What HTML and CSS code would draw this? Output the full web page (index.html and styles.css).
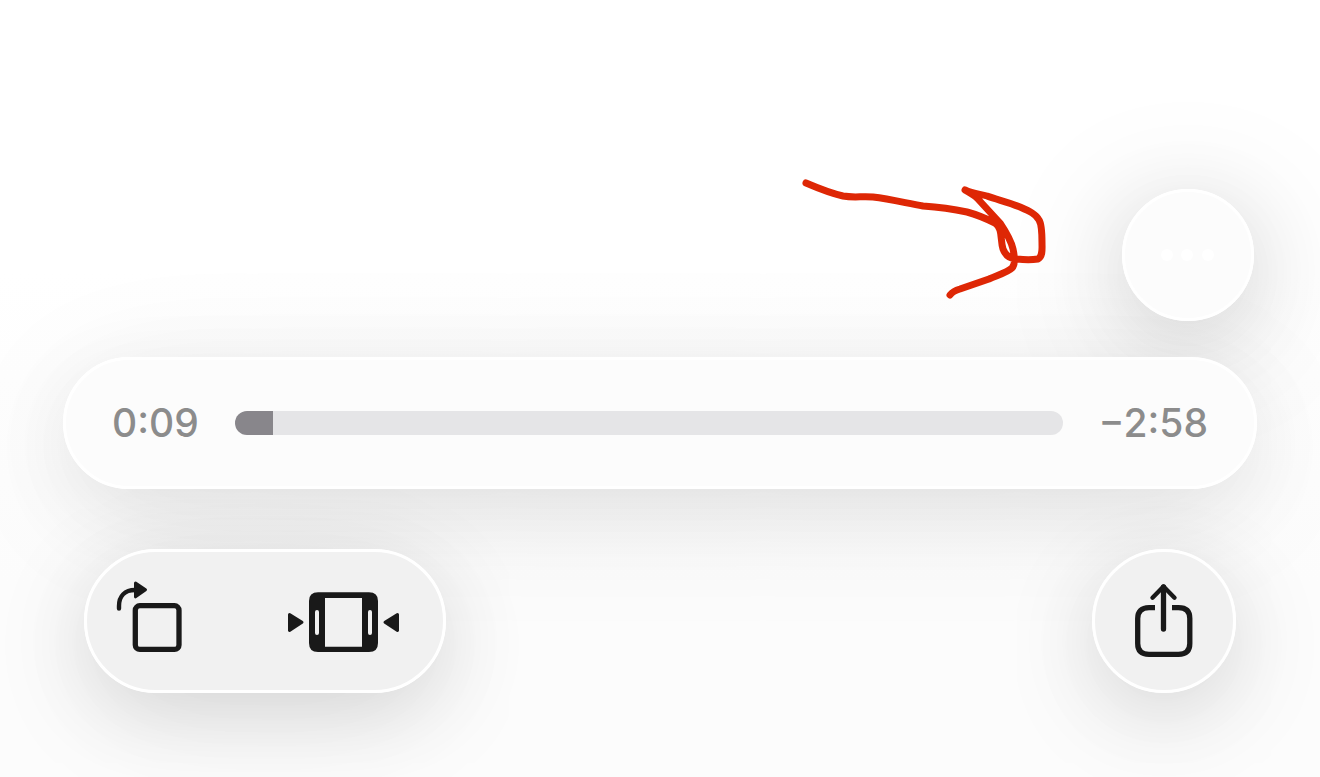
FILE: index.html
```html
<!DOCTYPE html>
<html lang="en">
<head>
    <meta charset="UTF-8">
    <meta name="viewport" content="width=device-width, initial-scale=1.0">
    <title>Video Player</title>
    <link rel="stylesheet" href="styles.css">
</head>
<body>

    <main class="player">
        <!-- Hand-drawn arrow and the more button -->
        <div class="top-row">
            <svg class="arrow" viewBox="0 0 248 132" aria-hidden="true">
                <path d="M6 -6 C20 0 34 5 43 7 C54 9 62 7 73 8 C90 10 106 14 123 17 C138 18 153 20 167 23 C178 26 187 30 195 34 C203 40 200 50 203 60 C206 68 211 70 217 70 C225 71 232 71 238 70 C243 67 242 60 242 54 C242 43 241 34 239 31 C236 25 229 22 220 18 C208 13 198 11 187 7 C180 5 173 5 165 1 C170 4 174 6 177 9 L200 34 C206 43 211 51 213 60 C215 69 215 76 212 79 C208 83 198 86 189 90 L160 100 Q153 102 150 106"/>
            </svg>
            <button class="glass more-btn" type="button" aria-label="More">
                <svg viewBox="0 0 60 12" aria-hidden="true">
                    <circle cx="9" cy="6" r="6"/>
                    <circle cx="29" cy="6" r="6"/>
                    <circle cx="50" cy="6" r="6"/>
                </svg>
            </button>
        </div>

        <!-- Timeline -->
        <div class="glass timeline">
            <label class="time" for="scrubber">0:09</label>
            <input class="scrubber" type="range" id="scrubber" min="0" max="187" value="9" style="--played: 4.6%">
            <span class="time">−2:58</span>
        </div>

        <!-- Bottom tools -->
        <div class="tools">
            <div class="glass tool-group">
                <button type="button" aria-label="Rotate">
                    <svg width="68" height="84" viewBox="0 0 68 84" aria-hidden="true">
                        <rect class="line" x="19.3" y="26.7" width="43.7" height="43.7" rx="4.5"/>
                        <path class="line thin" d="M3 29.5 V27 C3 17 9 11 19 11"/>
                        <path class="solid" d="M19.5 4 L29.5 10.7 L19.5 17.8 Z"/>
                    </svg>
                </button>
                <button type="button" aria-label="Fit screen">
                    <svg width="114" height="84" viewBox="0 0 114 84" aria-hidden="true">
                        <path fill-rule="evenodd" d="M31 13.3 H82 Q91 13.3 91 22 V64 Q91 73 82 73 H31 Q22 73 22 64 V22 Q22 13.3 31 13.3 Z M38 19 V67.7 H75 V19 Z M28 33 V54 a2 2 0 0 0 4 0 V33 a2 2 0 0 0 -4 0 Z M81 33 V54 a2 2 0 0 0 4 0 V33 a2 2 0 0 0 -4 0 Z"/>
                        <path class="solid" d="M2.5 35.5 L15 43.3 L2.5 51.5 Z"/>
                        <path class="solid" d="M110.5 35.5 L98 43.3 L110.5 51.5 Z"/>
                    </svg>
                </button>
            </div>
            <button class="glass share-btn" type="button" aria-label="Share">
                <svg width="84" height="84" viewBox="0 0 84 84" aria-hidden="true">
                    <path class="line box" d="M33 28.7 H27 C19.5 28.7 15.7 32.5 15.7 39.5 V64.5 C15.7 71.5 19.5 75.3 27 75.3 H56.5 C64 75.3 67.8 71.5 67.8 64.5 V39.5 C67.8 32.5 64 28.7 56.5 28.7 H50"/>
                    <path class="line" d="M41.5 8 V50"/>
                    <path class="line thin" d="M30.5 18.7 L41.5 7.5 L52.5 18.7"/>
                </svg>
            </button>
        </div>
    </main>

</body>
</html>
```
FILE: styles.css
```css
* {
    box-sizing: border-box;
}

body {
    margin: 0;
    font-family: Inter, "Liberation Sans", sans-serif;
}

.player {
    display: flex;
    flex-direction: column;
    justify-content: flex-end;
    min-height: 100vh;
    padding: 0 63px 84px;
    background: linear-gradient(to bottom, #fff 35%, #fcfcfc 75%);
    overflow: hidden;
    isolation: isolate;
}

button {
    display: flex;
    align-items: center;
    justify-content: center;
    padding: 0;
    border: none;
    background: transparent;
    cursor: pointer;
}

/* Shared look of the floating controls */
.glass {
    position: relative;
    border: 3px solid #fff;
    border-radius: 72px;
    background-color: #fcfcfc;
}

/* Shadow sits behind every control, so it never darkens a neighbour */
.glass::before {
    content: "";
    position: absolute;
    inset: -3px;
    z-index: -1;
    border-radius: inherit;
    box-shadow: 0 20px 80px rgba(0, 0, 0, 0.07), 0 24px 140px rgba(0, 0, 0, 0.07);
}

/* Top row */
.top-row {
    display: flex;
    justify-content: flex-end;
    gap: 74px;
    padding-right: 3px;
    margin-bottom: 36px;
}

.arrow {
    width: 248px;
    height: 132px;
    overflow: visible;
    fill: none;
    stroke: #de2705;
    stroke-width: 7;
    stroke-linecap: round;
    stroke-linejoin: round;
}

.more-btn {
    width: 132px;
    height: 132px;
}

.more-btn::before {
    box-shadow: 0 16px 80px rgba(0, 0, 0, 0.1), 0 20px 140px rgba(0, 0, 0, 0.14);
}

.more-btn svg {
    width: 60px;
    height: 12px;
    fill: #fff;
}

/* Timeline */
.timeline {
    display: flex;
    align-items: center;
    gap: 36px;
    height: 132px;
    padding: 0 46px;
}

.time {
    color: #8c8c8c;
    font-size: 39px;
    font-weight: 500;
    line-height: 48px;
    white-space: nowrap;
}

.scrubber {
    flex: 1;
    min-width: 0;
    height: 24px;
    margin: 0;
    border-radius: 12px;
    background: linear-gradient(to right, #88868b var(--played), #e5e5e7 var(--played));
    appearance: none;
    cursor: pointer;
}

.scrubber::-webkit-slider-thumb {
    appearance: none;
    width: 1px;
    height: 24px;
    background: transparent;
}

/* Bottom tools */
.tools {
    display: flex;
    justify-content: space-between;
    margin-top: 60px;
    padding: 0 21px;
}

.tool-group,
.share-btn {
    height: 144px;
    background-color: #f1f1f1;
}

.tool-group::before,
.share-btn::before {
    box-shadow: 0 20px 80px rgba(0, 0, 0, 0.12), 0 24px 140px rgba(0, 0, 0, 0.06);
}

.tool-group {
    display: flex;
    gap: 103px;
    padding: 0 42px 0 29px;
}

.share-btn {
    width: 144px;
}

.tools svg {
    fill: #191919;
    stroke: none;
}

.tools .line {
    fill: none;
    stroke: #191919;
    stroke-width: 5.3;
    stroke-linecap: round;
}

.tools .thin {
    stroke-width: 4.4;
    stroke-linejoin: round;
}

.tools .box {
    stroke-linecap: butt;
}

.tools .solid {
    stroke: #191919;
    stroke-width: 3;
    stroke-linejoin: round;
}
```
